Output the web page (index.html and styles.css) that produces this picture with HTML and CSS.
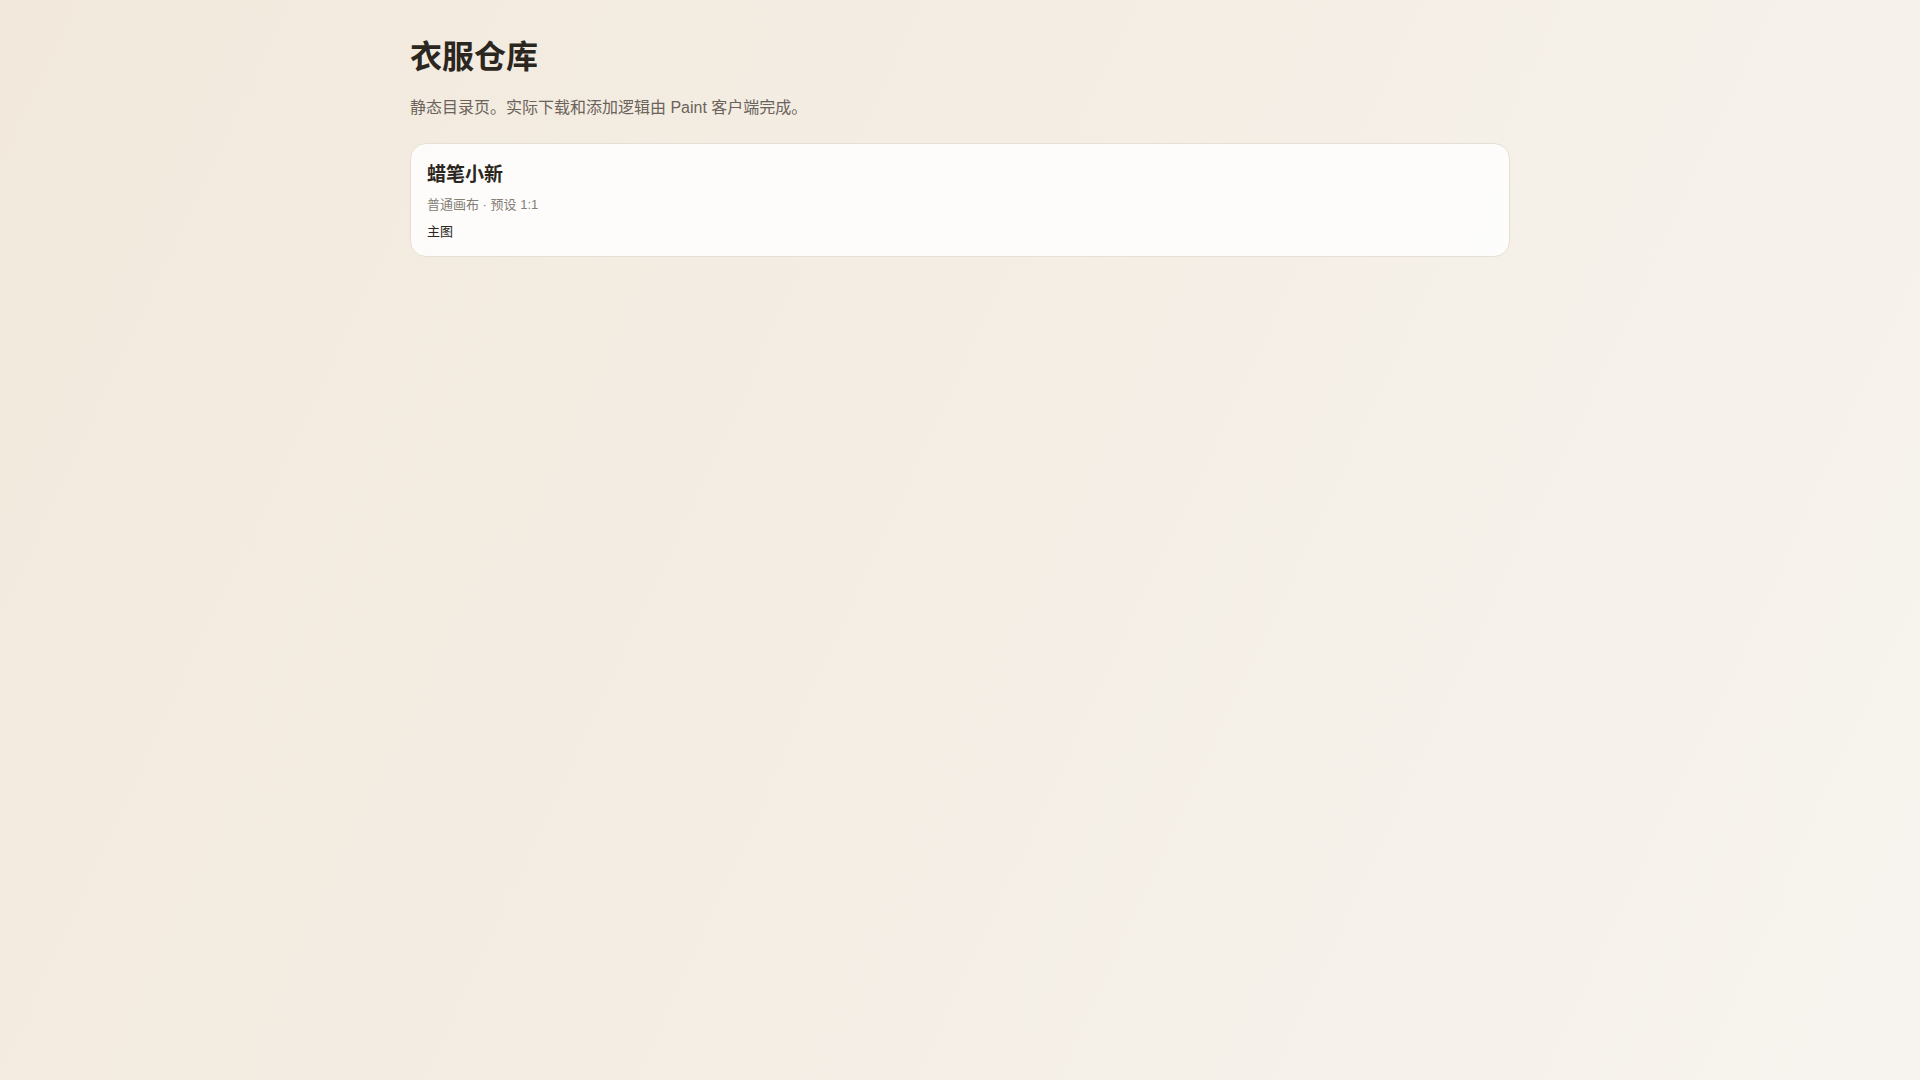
FILE: index.html
```html
<!DOCTYPE html>
<html lang="zh-CN">
<head>
<meta charset="utf-8">
<title>衣服仓库</title>
<link rel="stylesheet" href="styles.css">
</head>
<body>
<main class="page">
  <h1 class="title">衣服仓库</h1>
  <p class="subtitle">静态目录页。实际下载和添加逻辑由 Paint 客户端完成。</p>
  <section class="list">
    <article class="card">
      <h2 class="card-title">蜡笔小新</h2>
      <div class="card-meta">普通画布 · 预设 1:1</div>
      <div class="card-tag">主图</div>
    </article>
  </section>
</main>
</body>
</html>
```

FILE: styles.css
```css
html, body {
  margin: 0;
  padding: 0;
  min-height: 100%;
}
body {
  min-height: 100vh;
  background: linear-gradient(115deg, #f2e9dc 0%, #f4eee5 50%, #f7f3ee 100%);
  font-family: "Liberation Sans", Arial, "Noto Sans CJK SC", sans-serif;
  color: #2b2620;
}
.page {
  max-width: 1100px;
  margin: 0 auto;
  padding: 38px 0 40px;
}
.title {
  margin: 0;
  font-size: 32px;
  line-height: 1.2;
  font-weight: 700;
  color: #2b2620;
}
.subtitle {
  margin: 20px 0 0;
  font-size: 16px;
  line-height: 24px;
  color: #6b635b;
}
.list {
  margin-top: 23px;
  display: flex;
  flex-direction: column;
  gap: 12px;
}
.card {
  background: rgba(255, 255, 255, 0.82);
  border: 1px solid #e6dfd6;
  border-radius: 16px;
  padding: 18px 16px 15px;
  display: flex;
  flex-direction: column;
}
.card-title {
  margin: 0;
  font-size: 19px;
  line-height: 26px;
  font-weight: 700;
  color: #2b2620;
}
.card-meta {
  margin-top: 8px;
  font-size: 13px;
  line-height: 18px;
  font-weight: 400;
  color: #857e76;
}
.card-tag {
  margin-top: 9px;
  font-size: 13px;
  line-height: 18px;
  font-weight: 400;
  color: #2b2620;
}
```
